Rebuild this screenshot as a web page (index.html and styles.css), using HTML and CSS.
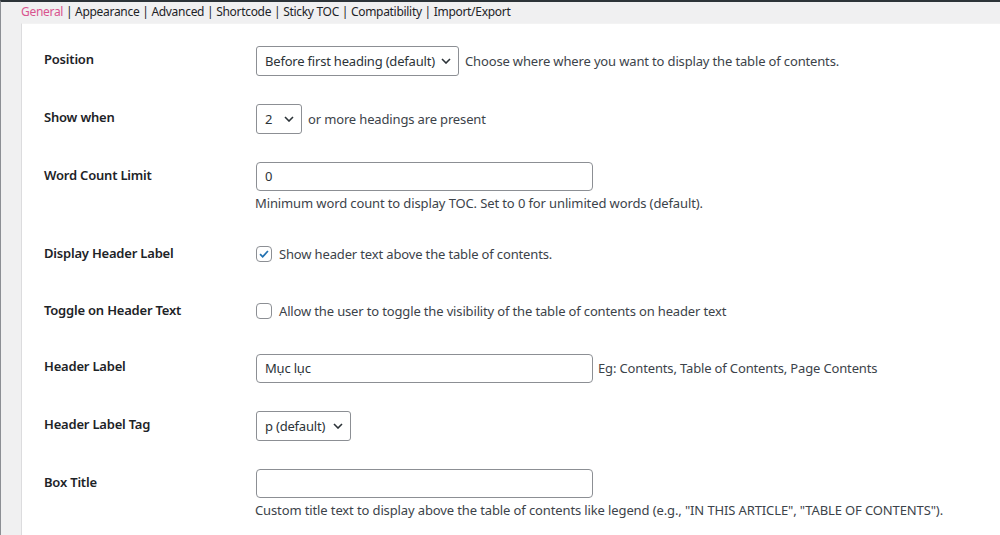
FILE: index.html
```html
<!DOCTYPE html>
<html lang="vi">
<head>
<meta charset="utf-8">
<title>Settings</title>
<link rel="stylesheet" href="styles.css">
</head>
<body>
<div class="frame">
  <nav class="tabs">
    <a class="tab current" href="#">General</a> | <a class="tab" href="#">Appearance</a> | <a class="tab" href="#">Advanced</a> | <a class="tab" href="#">Shortcode</a> | <a class="tab" href="#">Sticky TOC</a> | <a class="tab" href="#">Compatibility</a> | <a class="tab" href="#">Import/Export</a>
  </nav>
  <div class="panel">
    <div class="form">
      <div class="row">
        <div class="label">Position</div>
        <div class="field inline">
          <div class="select w-position"><span>Before first heading (default)</span><svg class="chev" viewBox="0 0 10 6"><path d="M1 1l4 4 4-4"/></svg></div>
          <span class="note">Choose where where you want to display the table of contents.</span>
        </div>
      </div>
      <div class="row">
        <div class="label">Show when</div>
        <div class="field inline">
          <div class="select w-count"><span>2</span><svg class="chev" viewBox="0 0 10 6"><path d="M1 1l4 4 4-4"/></svg></div>
          <span class="note">or more headings are present</span>
        </div>
      </div>
      <div class="row">
        <div class="label">Word Count Limit</div>
        <div class="field">
          <div class="input">0</div>
          <p class="desc">Minimum word count to display TOC. Set to 0 for unlimited words (default).</p>
        </div>
      </div>
      <div class="row check-row">
        <div class="label">Display Header Label</div>
        <div class="field inline">
          <span class="checkbox checked"><svg viewBox="0 0 16 16"><path d="M3.5 8.2l3 3 6-6.6"/></svg></span>
          <span class="note">Show header text above the table of contents.</span>
        </div>
      </div>
      <div class="row check-row short">
        <div class="label">Toggle on Header Text</div>
        <div class="field inline">
          <span class="checkbox"></span>
          <span class="note">Allow the user to toggle the visibility of the table of contents on header text</span>
        </div>
      </div>
      <div class="row">
        <div class="label">Header Label</div>
        <div class="field inline">
          <div class="input">Mục lục</div>
          <span class="note eg">Eg: Contents, Table of Contents, Page Contents</span>
        </div>
      </div>
      <div class="row">
        <div class="label">Header Label Tag</div>
        <div class="field inline">
          <div class="select w-tag"><span>p (default)</span><svg class="chev" viewBox="0 0 10 6"><path d="M1 1l4 4 4-4"/></svg></div>
        </div>
      </div>
      <div class="row">
        <div class="label">Box Title</div>
        <div class="field">
          <div class="input"></div>
          <p class="desc">Custom title text to display above the table of contents like legend (e.g., "IN THIS ARTICLE", "TABLE OF CONTENTS").</p>
        </div>
      </div>
    </div>
  </div>
</div>
</body>
</html>
```

FILE: styles.css
```css
* { box-sizing: border-box; }
html, body {
  margin: 0;
  padding: 0;
  height: 100%;
  background: #f0f0f1;
}
body {
  font-family: "Noto Sans", "Open Sans", sans-serif;
  font-size: 13px;
  color: #3c434a;
  overflow: hidden;
}
.frame {
  height: 535px;
  border-top: 2px solid #2c3338;
  border-left: 1px solid #8c8f94;
  padding-left: 20px;
  display: flex;
  flex-direction: column;
}
.tabs {
  height: 21px;
  line-height: 19px;
  font-size: 12px;
  color: #1d2327;
  white-space: nowrap;
  letter-spacing: -0.3px;
}
.tab {
  color: #1d2327;
  text-decoration: none;
}
.tab.current {
  color: #d9548f;
}
.panel {
  flex: 1;
  background: #fff;
  border-left: 1px solid #dcdcde;
  border-top: 1px solid #f3f3f3;
  padding: 8px 0 0 22px;
}
.form {
  display: grid;
  grid-template-columns: 212px 1fr;
}
.row {
  display: contents;
}
.label {
  font-weight: 600;
  color: #1d2327;
  line-height: 17px;
  padding: 19px 10px 21px 0;
  letter-spacing: -0.2px;
}
.field {
  padding: 14px 0 14px 0;
  line-height: 17px;
}
.field.inline {
  display: flex;
  align-items: center;
  gap: 6px;
  align-self: start;
  min-height: 58px;
}
.check-row .field.inline {
  min-height: 57px;
  gap: 7px;
}
.check-row.short .field.inline {
  min-height: 56px;
}
.check-row .label {
  padding-bottom: 21px;
}
.check-row.short .label {
  padding-bottom: 20px;
}
.note {
  letter-spacing: -0.15px;
  white-space: nowrap;
}
.note.eg {
  margin-left: -1px;
}
.select {
  height: 30px;
  border: 1px solid #8c8f94;
  border-radius: 3px;
  display: flex;
  align-items: center;
  padding: 0 7px 0 8px;
  color: #2c3338;
  letter-spacing: -0.2px;
  white-space: nowrap;
  background: #fff;
}
.select span { flex: 1; }
.w-position { width: 203px; }
.w-count { width: 46px; }
.w-tag { width: 95px; }
.chev {
  width: 10px;
  height: 6px;
  flex: none;
  margin-left: 6px;
}
.chev path {
  fill: none;
  stroke: #2c3338;
  stroke-width: 1.6;
}
.input {
  width: 337px;
  height: 29px;
  border: 1px solid #8c8f94;
  border-radius: 4px;
  padding: 0 8px;
  line-height: 27px;
  color: #2c3338;
  letter-spacing: -0.2px;
  background: #fff;
}
.desc {
  margin: 3px 0 0 -1px;
  line-height: 18px;
  color: #3c434a;
  letter-spacing: -0.12px;
  white-space: nowrap;
}
.checkbox {
  width: 16px;
  height: 16px;
  border: 1px solid #8c8f94;
  border-radius: 4px;
  flex: none;
  display: inline-flex;
  align-items: center;
  justify-content: center;
  background: #fff;
  margin-top: -1px;
}
.checkbox svg {
  width: 14px;
  height: 14px;
}
.checkbox path {
  fill: none;
  stroke: #2271b1;
  stroke-width: 2;
}
```
